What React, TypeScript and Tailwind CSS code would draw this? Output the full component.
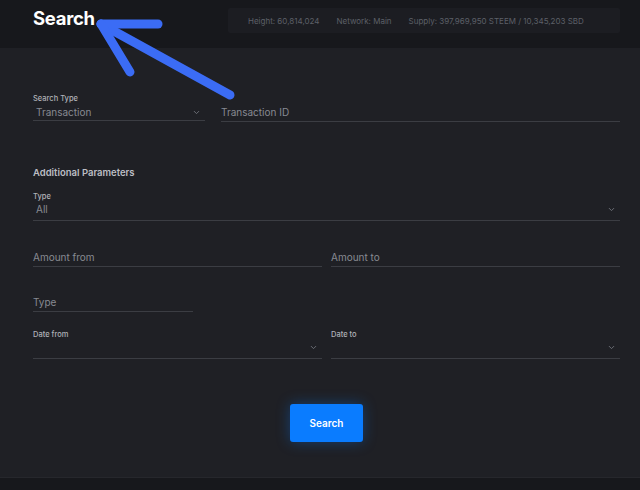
import { ChevronDown } from "lucide-react";

const font = { fontFamily: "Inter, 'Noto Sans', sans-serif" };

function Chevron() {
  return <ChevronDown size={9} strokeWidth={2.5} className="text-[#6f727a]" />;
}

function TextField({ placeholder, className = "" }: { placeholder: string; className?: string }) {
  return (
    <div className={`flex h-[19px] items-center border-b border-[#3b3d43] text-[10px] text-[#878a92] ${className}`}>
      {placeholder}
    </div>
  );
}

function SelectField({
  label,
  value,
  className = "",
}: {
  label: string;
  value?: string;
  className?: string;
}) {
  return (
    <div className={`flex flex-col ${className}`}>
      <span className="text-[7.5px] leading-[10px] font-medium text-[#b0b2b8]">{label}</span>
      <div className="flex h-[19px] items-center justify-between border-b border-[#3b3d43] pl-[3px] pr-[4px] text-[10px] text-[#878a92]">
        <span className="-mt-[4px]">{value}</span>
        <span className="-mt-[4px] flex">
          <Chevron />
        </span>
      </div>
    </div>
  );
}

export default function App() {
  return (
    <div className="relative h-[490px] w-[640px] overflow-hidden bg-[#1f2025]" style={font}>
      {/* header */}
      <header className="flex h-[48px] items-start bg-[#17181c] pl-[33px] pr-[20px]">
        <h1 className="mt-[5px] text-[18.5px] font-bold tracking-[-0.3px] text-white">Search</h1>
        <div className="ml-auto mt-[8px] flex h-[25px] w-[392px] items-center gap-[17px] rounded-[2px] bg-[#1c1d22] pl-[20px] text-[8px] text-[#5d6068]">
          <span>Height: 60,814,024</span>
          <span>Network: Main</span>
          <span>Supply: 397,969,950 STEEM / 10,345,203 SBD</span>
        </div>
      </header>

      {/* form */}
      <main className="h-[429px] pl-[33px] pr-[20px] pt-[46px]">
        <div className="flex items-end gap-[16px]">
          <div className="flex w-[172px] flex-col">
            <span className="text-[7.5px] leading-[10px] font-medium text-[#b0b2b8]">Search Type</span>
            <div className="flex h-[17px] items-center justify-between border-b border-[#3b3d43] pl-[3px] pr-[4px] text-[10px] text-[#878a92]">
              <span>Transaction</span>
              <Chevron />
            </div>
          </div>
          <TextField placeholder="Transaction ID" className="mb-[-1px] flex-1" />
        </div>

        <h2 className="mt-[45px] text-[9.5px] leading-[14px] font-semibold text-[#bcbec4]">
          Additional Parameters
        </h2>

        <SelectField label="Type" value="All" className="mt-[12px]" />

        <div className="mt-[27px] grid grid-cols-2 gap-[9px]">
          <TextField placeholder="Amount from" />
          <TextField placeholder="Amount to" />
        </div>

        <TextField placeholder="Type" className="mt-[26px] w-[160px]" />

        <div className="mt-[18px] grid grid-cols-2 gap-[9px]">
          <SelectField label="Date from" />
          <SelectField label="Date to" />
        </div>

        <div className="mt-[45px] flex justify-center">
          <button className="h-[38px] w-[73px] rounded-[3px] bg-[#0a7cff] text-[10px] font-semibold text-white shadow-[0_0_14px_rgba(10,124,255,0.35)]">
            Search
          </button>
        </div>
      </main>

      <footer className="h-[13px] border-t border-[#26272c] bg-[#17181c]" />

      {/* annotation arrow */}
      <svg
        className="pointer-events-none absolute left-0 top-0"
        width="640"
        height="490"
        viewBox="0 0 640 490"
      >
        <g stroke="#3b6cf5" strokeWidth="9" strokeLinecap="round" strokeLinejoin="round" fill="none">
          <path d="M230 95 L101 24" />
          <path d="M101 24 L158 24" />
          <path d="M101 24 L130 72" />
        </g>
      </svg>
    </div>
  );
}
